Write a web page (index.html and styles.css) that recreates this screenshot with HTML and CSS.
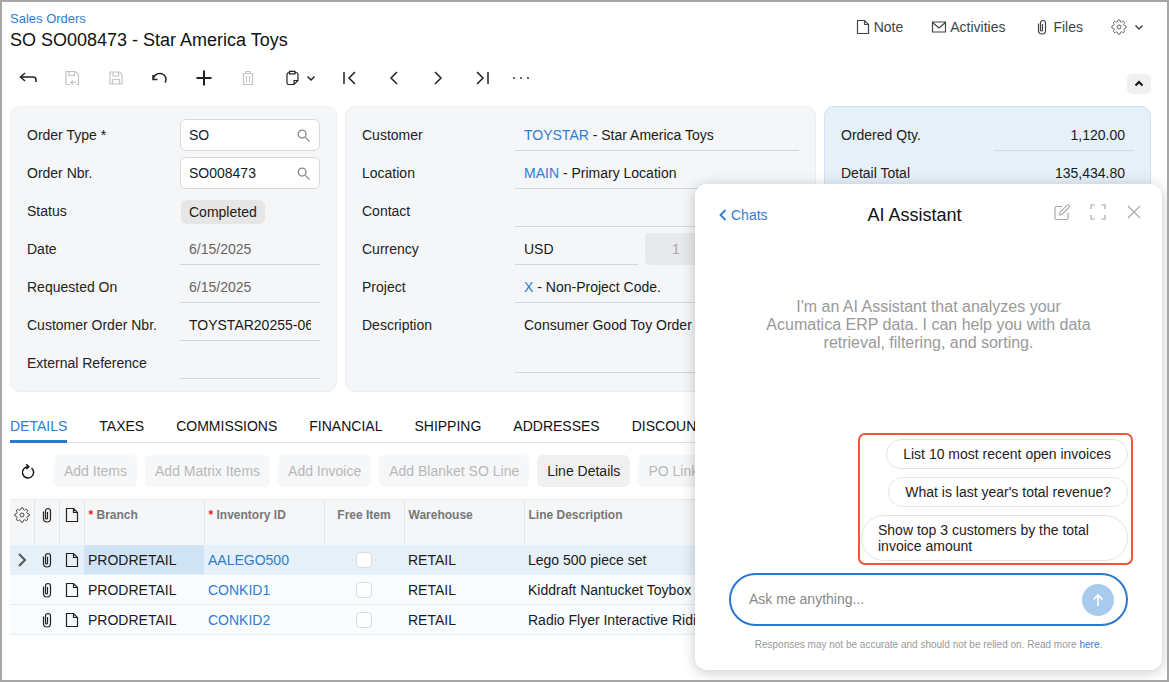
FILE: index.html
```html
<!DOCTYPE html>
<html lang="en">
<head>
    <meta charset="UTF-8">
    <meta name="viewport" content="width=device-width, initial-scale=1.0">
    <title>SO SO008473 - Star America Toys</title>
    <link rel="stylesheet" href="styles.css">
</head>
<body>
    <svg class="sprite" aria-hidden="true">
        <symbol id="i-gear" viewBox="0 0 24 24"><circle cx="12" cy="12" r="3"/><path d="M19.4 15a1.65 1.65 0 0 0 .33 1.82l.06.06a2 2 0 0 1 0 2.83 2 2 0 0 1-2.83 0l-.06-.06a1.65 1.65 0 0 0-1.82-.33 1.65 1.65 0 0 0-1 1.51V21a2 2 0 0 1-2 2 2 2 0 0 1-2-2v-.09A1.65 1.65 0 0 0 9 19.4a1.65 1.65 0 0 0-1.82.33l-.06.06a2 2 0 0 1-2.83 0 2 2 0 0 1 0-2.83l.06-.06a1.65 1.65 0 0 0 .33-1.82 1.65 1.65 0 0 0-1.51-1H3a2 2 0 0 1-2-2 2 2 0 0 1 2-2h.09A1.65 1.65 0 0 0 4.6 9a1.65 1.65 0 0 0-.33-1.82l-.06-.06a2 2 0 0 1 0-2.83 2 2 0 0 1 2.83 0l.06.06a1.65 1.65 0 0 0 1.82.33H9a1.65 1.65 0 0 0 1-1.51V3a2 2 0 0 1 2-2 2 2 0 0 1 2 2v.09a1.65 1.65 0 0 0 1 1.51 1.65 1.65 0 0 0 1.82-.33l.06-.06a2 2 0 0 1 2.83 0 2 2 0 0 1 0 2.83l-.06.06a1.65 1.65 0 0 0-.33 1.82V9a1.65 1.65 0 0 0 1.51 1H21a2 2 0 0 1 2 2 2 2 0 0 1-2 2h-.09a1.65 1.65 0 0 0-1.51 1z"/></symbol>
        <symbol id="i-clip" viewBox="0 0 16 16"><path d="M4.5 4.5v7a3.5 3.5 0 0 0 7 0V4a2.5 2.5 0 0 0-5 0v7a1 1 0 0 0 2 0V5"/></symbol>
        <symbol id="i-note" viewBox="0 0 16 16"><path d="M2.5 1.5h7l4 4v9h-11zM9.5 1.5v4h4"/></symbol>
        <symbol id="i-mail" viewBox="0 0 16 16"><path d="M1.5 3h13v10h-13zM1.5 3.5 8 9l6.5-5.500"/></symbol>
        <symbol id="i-search" viewBox="0 0 16 16"><circle cx="6.5" cy="6.5" r="4.2"/><path d="m10 10 4.500 4.500"/></symbol>
        <symbol id="i-down" viewBox="0 0 12 12"><path d="m2.5 4.5 3.500 3.500 3.500-3.500"/></symbol>
        <symbol id="i-floppy" viewBox="0 0 16 16"><path d="M2 2h9.500L14 4.500V14H2zM5 2v4h5.500V2M4.500 14V9.500h7V14"/></symbol>
    </svg>

    <div class="window">
        <header class="page-header">
            <div>
                <a class="crumb">Sales Orders</a>
                <h1 class="title">SO SO008473 - Star America Toys</h1>
            </div>
            <nav class="top-actions">
                <span class="top-action"><svg class="icon"><use href="#i-note"/></svg>Note</span>
                <span class="top-action"><svg class="icon"><use href="#i-mail"/></svg>Activities</span>
                <span class="top-action files-action"><svg class="icon"><use href="#i-clip"/></svg>Files</span>
                <span class="top-action gear-action"><svg class="icon"><use href="#i-gear"/></svg><svg class="icon-sm"><use href="#i-down"/></svg></span>
            </nav>
        </header>

        <div class="toolbar">
            <span class="tool"><svg class="icon-lg" viewBox="0 0 20 20"><path d="M7 5 2.500 9 7 13M2.500 9H15a3 3 0 0 1 3 3v2"/></svg></span>
            <span class="tool off"><svg class="icon" viewBox="0 0 16 16"><path d="M6 14.500H2v-13h9.500L14.500 4.500v10H12M5 1.500v4h5.500v-4M7 12.500h5M9 10.500l-2 2 2 2"/></svg></span>
            <span class="tool off"><svg class="icon"><use href="#i-floppy"/></svg></span>
            <span class="tool"><svg class="icon-lg" viewBox="0 0 20 20"><path d="M3 7v4.500h4.500M3.300 11.200A6.200 6.200 0 0 1 9.500 5.500a6 6 0 0 1 6.500 5.800c0 1.200-.3 2.200-.9 3.200"/></svg></span>
            <span class="tool"><svg class="icon-lg plus" viewBox="0 0 20 20"><path d="M10 2.500v15M2.500 10h15"/></svg></span>
            <span class="tool off"><svg class="icon" viewBox="0 0 16 16"><path d="M2.500 3.500h11M6 3.500v-2h4v2M3.500 3.500v11h9v-11M6.500 6v6M9.500 6v6"/></svg></span>
            <span class="tool tool-menu"><svg class="icon" viewBox="0 0 16 16"><path d="M5.500 2.500H5a2 2 0 0 0-2 2V13a1.500 1.500 0 0 0 1.500 1.500H10l4-4v-6a2 2 0 0 0-2-2h-.5M5.500 1.300h5.500v2.500H5.500zM10 14.500v-4h4"/></svg><svg class="icon-sm"><use href="#i-down"/></svg></span>
            <span class="tool"><svg class="icon-lg" viewBox="0 0 20 20"><path d="M4 4v12M15 4l-6 6 6 6"/></svg></span>
            <span class="tool"><svg class="icon-lg" viewBox="0 0 20 20"><path d="m13 4-6 6 6 6"/></svg></span>
            <span class="tool"><svg class="icon-lg" viewBox="0 0 20 20"><path d="m7 4 6 6-6 6"/></svg></span>
            <span class="tool"><svg class="icon-lg" viewBox="0 0 20 20"><path d="M16 4v12M5 4l6 6-6 6"/></svg></span>
            <span class="tool tool-more"><svg class="icon-lg dots" viewBox="0 0 20 20"><circle cx="3" cy="10" r="1"/><circle cx="10" cy="10" r="1"/><circle cx="17" cy="10" r="1"/></svg></span>
            <button class="collapse"><svg class="icon-sm chevron-up"><use href="#i-down"/></svg></button>
        </div>

        <section class="cards">
            <div class="card fields card-order">
                <label>Order Type <span class="req">*</span></label>
                <div class="input">SO<svg class="icon-search"><use href="#i-search"/></svg></div>
                <label>Order Nbr.</label>
                <div class="input">SO008473<svg class="icon-search"><use href="#i-search"/></svg></div>
                <label>Status</label>
                <div><span class="status">Completed</span></div>
                <label>Date</label>
                <div class="value muted">6/15/2025</div>
                <label>Requested On</label>
                <div class="value muted">6/15/2025</div>
                <label>Customer Order Nbr.</label>
                <div class="value"><span class="clip-text">TOYSTAR20255-06-15</span></div>
                <label>External Reference</label>
                <div class="value"></div>
            </div>

            <div class="card fields card-customer">
                <label>Customer</label>
                <div class="value"><a>TOYSTAR</a> - Star America Toys</div>
                <label>Location</label>
                <div class="value"><a>MAIN</a> - Primary Location</div>
                <label>Contact</label>
                <div class="value"></div>
                <label>Currency</label>
                <div class="currency">
                    <div class="value">USD</div>
                    <div class="rate">1</div>
                </div>
                <label>Project</label>
                <div class="value"><a>X</a> - Non-Project Code.</div>
                <label>Description</label>
                <div class="value value-tall">Consumer Good Toy Order</div>
            </div>

            <div class="card fields card-totals">
                <label>Ordered Qty.</label>
                <div class="value number">1,120.00</div>
                <label>Detail Total</label>
                <div class="value number">135,434.80</div>
            </div>
        </section>

        <nav class="tabs">
            <span class="tab active">Details</span>
            <span class="tab">Taxes</span>
            <span class="tab">Commissions</span>
            <span class="tab">Financial</span>
            <span class="tab">Shipping</span>
            <span class="tab">Addresses</span>
            <span class="tab">Discounts</span>
            <span class="tab">Payments</span>
        </nav>

        <div class="grid-toolbar">
            <span class="refresh"><svg class="icon-lg" viewBox="0 0 20 20"><path d="M13.500 7a5.600 5.600 0 1 1-3.500-1.200M8.200 3.300l2.600 2.500L8.200 8"/></svg></span>
            <button class="grid-btn">Add Items</button>
            <button class="grid-btn">Add Matrix Items</button>
            <button class="grid-btn">Add Invoice</button>
            <button class="grid-btn">Add Blanket SO Line</button>
            <button class="grid-btn on">Line Details</button>
            <button class="grid-btn">PO Link</button>
        </div>

        <table class="grid">
            <colgroup>
                <col class="c-first"><col class="c-icon"><col class="c-icon">
                <col class="c-wide"><col class="c-wide"><col class="c-free"><col class="c-wide"><col>
            </colgroup>
            <thead>
                <tr>
                    <th class="cell-icon"><svg class="icon"><use href="#i-gear"/></svg></th>
                    <th class="cell-icon"><svg class="icon"><use href="#i-clip"/></svg></th>
                    <th class="cell-icon"><svg class="icon"><use href="#i-note"/></svg></th>
                    <th><span class="req">*</span> Branch</th>
                    <th><span class="req">*</span> Inventory ID</th>
                    <th class="center">Free Item</th>
                    <th>Warehouse</th>
                    <th>Line Description</th>
                </tr>
            </thead>
            <tbody>
                <tr class="selected">
                    <td class="cell-icon"><svg class="row-arrow" viewBox="0 0 12 16"><path d="m3 2 6 6-6 6"/></svg></td>
                    <td class="cell-icon"><svg class="icon"><use href="#i-clip"/></svg></td>
                    <td class="cell-icon"><svg class="icon"><use href="#i-note"/></svg></td>
                    <td class="current">PRODRETAIL</td>
                    <td><a>AALEGO500</a></td>
                    <td class="center"><span class="check"></span></td>
                    <td>RETAIL</td>
                    <td>Lego 500 piece set</td>
                </tr>
                <tr>
                    <td class="cell-icon"></td>
                    <td class="cell-icon"><svg class="icon"><use href="#i-clip"/></svg></td>
                    <td class="cell-icon"><svg class="icon"><use href="#i-note"/></svg></td>
                    <td>PRODRETAIL</td>
                    <td><a>CONKID1</a></td>
                    <td class="center"><span class="check"></span></td>
                    <td>RETAIL</td>
                    <td>Kiddraft Nantucket Toybox</td>
                </tr>
                <tr>
                    <td class="cell-icon"></td>
                    <td class="cell-icon"><svg class="icon"><use href="#i-clip"/></svg></td>
                    <td class="cell-icon"><svg class="icon"><use href="#i-note"/></svg></td>
                    <td>PRODRETAIL</td>
                    <td><a>CONKID2</a></td>
                    <td class="center"><span class="check"></span></td>
                    <td>RETAIL</td>
                    <td>Radio Flyer Interactive Riding Toy</td>
                </tr>
            </tbody>
        </table>

        <aside class="assistant">
            <div class="assistant-head">
                <a class="back"><svg class="back-icon" viewBox="0 0 10 14"><path d="M7.500 2 2.500 7l5 5"/></svg>Chats</a>
                <h2 class="assistant-title">AI Assistant</h2>
                <div class="assistant-icons">
                    <svg class="icon-head" viewBox="0 0 18 18"><path d="M15 9.500V15a1.500 1.500 0 0 1-1.500 1.500h-10A1.500 1.500 0 0 1 2 15V5a1.500 1.500 0 0 1 1.500-1.500H9M6.500 12l.6-2.800 7-7a1.200 1.200 0 0 1 2 2l-7 7z"/></svg>
                    <svg class="icon-head" viewBox="0 0 18 18"><path d="M2 6V2h4M12 2h4v4M16 12v4h-4M6 16H2v-4"/></svg>
                    <svg class="icon-head" viewBox="0 0 18 18"><path d="m3 3 12 12M15 3 3 15"/></svg>
                </div>
            </div>

            <p class="intro">I'm an AI Assistant that analyzes your Acumatica ERP data. I can help you with data retrieval, filtering, and sorting.</p>

            <div class="suggestions">
                <button class="pill">List 10 most recent open invoices</button>
                <button class="pill">What is last year's total revenue?</button>
                <button class="pill">Show top 3 customers by the total invoice amount</button>
            </div>

            <div class="ask">
                <span class="ask-text">Ask me anything...</span>
                <span class="send"><svg class="send-icon" viewBox="0 0 16 16"><path d="M8 14V3M3.500 7.500 8 3l4.500 4.500"/></svg></span>
            </div>

            <p class="disclaimer">Responses may not be accurate and should not be relied on. Read more <a>here</a>.</p>
        </aside>
    </div>
</body>
</html>
```

FILE: styles.css
```css
* {
    box-sizing: border-box;
}

body {
    margin: 0;
    font-family: "Liberation Sans", Arial, sans-serif;
    font-size: 14px;
    color: #1a1a1a;
    background: #fff;
}

a {
    color: #2f7dd1;
}

.sprite {
    display: none;
}

svg {
    fill: none;
    stroke: currentColor;
    stroke-width: 1.2;
    flex: none;
}

.icon {
    width: 16px;
    height: 16px;
}

.icon-sm {
    width: 12px;
    height: 12px;
    stroke-width: 1.5;
}

.icon-lg {
    width: 20px;
    height: 20px;
    stroke-width: 1.5;
}

.window {
    position: relative;
    width: 1169px;
    height: 682px;
    border: 2px solid #a6a6a6;
    overflow: hidden;
}

/* header */
.page-header {
    display: flex;
    justify-content: space-between;
    height: 54px;
    padding: 9px 16px 0 8px;
}

.crumb {
    display: block;
    font-size: 13px;
    line-height: 16px;
}

.title {
    margin: 1px 0 0;
    font-size: 18px;
    font-weight: normal;
    line-height: 24px;
    color: #111;
}

.top-actions {
    display: flex;
    align-items: center;
    height: 32px;
    margin-right: 6px;
    color: #444;
}

.top-action {
    display: flex;
    align-items: center;
    gap: 3px;
    margin-left: 28px;
}

.files-action {
    margin-left: 29px;
}

.gear-action {
    gap: 6px;
}

/* main toolbar */
.toolbar {
    display: flex;
    align-items: center;
    height: 44px;
    padding: 0 16px 0 4px;
    color: #222;
}

.tool {
    display: flex;
    align-items: center;
    justify-content: center;
    width: 44px;
    height: 44px;
}

.tool.off {
    color: #c4c4c4;
}

.tool-menu {
    width: 58px;
    justify-content: flex-start;
    gap: 5px;
    padding-left: 14px;
}

.tool-more {
    width: 34px;
}

.dots {
    fill: #333;
    stroke: none;
}

.plus {
    stroke-width: 2;
}

.collapse {
    display: flex;
    align-items: center;
    justify-content: center;
    align-self: flex-end;
    width: 24px;
    height: 20px;
    margin: 0 0 6px auto;
    padding: 0;
    border: none;
    border-radius: 5px;
    background: #eef0f2;
    color: #111;
}

.chevron-up {
    transform: rotate(180deg);
    stroke-width: 2;
}

/* form cards */
.cards {
    display: flex;
    gap: 8px;
    margin: 6px 16px 0 8px;
}

.card {
    height: 286px;
    padding: 9px 16px;
    border: 1px solid #eceef1;
    border-radius: 10px;
    background: #f5f6f8;
    overflow: hidden;
}

.card-order,
.card-totals {
    width: 327px;
}

.card-customer {
    width: 471px;
}

.card-totals {
    background: #e5f0f9;
    border-color: #cde2f4;
}

.fields {
    display: grid;
    grid-template-columns: 153px 1fr;
    grid-auto-rows: 38px;
    align-items: center;
}

.fields label {
    color: #222;
}

.req {
    color: #111;
}

.input {
    display: flex;
    align-items: center;
    justify-content: space-between;
    height: 32px;
    padding: 0 8px;
    border: 1px solid #d8dadd;
    border-radius: 6px;
    background: #fff;
}

.icon-search {
    width: 15px;
    height: 15px;
    color: #888;
    stroke-width: 1.4;
}

.value {
    height: 32px;
    padding: 0 9px;
    line-height: 32px;
    border-bottom: 1px solid #d5d7da;
    white-space: nowrap;
    overflow: hidden;
}

.muted {
    color: #666;
}

.clip-text {
    display: block;
    overflow: hidden;
}

.number {
    text-align: right;
}

.status {
    display: inline-block;
    height: 24px;
    margin: 2px 0 0 1px;
    padding: 0 8px;
    line-height: 24px;
    border-radius: 6px;
    background: #e6e6e6;
}

.currency {
    display: flex;
    gap: 7px;
}

.currency .value {
    width: 123px;
}

.rate {
    width: 62px;
    height: 32px;
    line-height: 32px;
    text-align: center;
    border-radius: 5px;
    background: #e8e9eb;
    color: #aaa;
}

.value-tall {
    grid-row: span 2;
    align-self: start;
    height: 64px;
    margin-top: 3px;
}

/* tabs */
.tabs {
    display: flex;
    gap: 32px;
    height: 33px;
    margin: 18px 16px 0 8px;
    border-bottom: 1px solid #dfe1e4;
    white-space: nowrap;
}

.tab {
    height: 33px;
    padding-top: 8px;
    text-transform: uppercase;
    color: #111;
}

.tab.active {
    color: #2f7dd1;
    border-bottom: 3px solid #2a78d0;
}

/* grid toolbar */
.grid-toolbar {
    display: flex;
    align-items: center;
    gap: 8px;
    height: 32px;
    margin: 12px 16px 0 8px;
}

.refresh {
    display: flex;
    justify-content: center;
    width: 36px;
    color: #111;
}

.grid-btn {
    height: 32px;
    padding: 0 10px;
    border: none;
    border-radius: 6px;
    background: #f6f7f8;
    color: #b8b8b8;
    font: inherit;
}

.grid-btn.on {
    background: #f0f0f0;
    color: #222;
}

/* grid */
.grid {
    width: 1141px;
    margin: 12px 16px 0 8px;
    border-collapse: collapse;
    table-layout: fixed;
}

.c-first {
    width: 24px;
}

.c-icon {
    width: 25px;
}

.c-wide {
    width: 120px;
}

.c-free {
    width: 80px;
}

.grid th {
    height: 45px;
    padding: 7px 4px 0;
    vertical-align: top;
    text-align: left;
    font-size: 12px;
    line-height: 16px;
    color: #777;
    background: #f5f6f8;
    border-top: 1px solid #e8eaed;
    border-right: 1px solid #e3e5e8;
}

.grid th.center,
.grid td.center {
    text-align: center;
}

.grid th .req {
    color: #e8202a;
}

.grid th.cell-icon {
    padding: 7px 0 0;
    text-align: center;
    color: #222;
}

.grid td {
    height: 30px;
    padding: 0 4px;
    background: #f8fcff;
    border-bottom: 1px solid #e6edf3;
    white-space: nowrap;
    overflow: hidden;
}

.grid td.cell-icon {
    padding: 0;
    text-align: center;
    color: #222;
}

.grid td svg {
    vertical-align: middle;
}

.grid .selected td {
    padding-top: 1px;
    background: #e5f0f9;
    border-bottom-color: #e5f0f9;
}

.grid .selected td.current {
    background: #cfe3f4;
}

.row-arrow {
    width: 12px;
    height: 16px;
    color: #555;
    stroke-width: 2;
}

.check {
    display: inline-block;
    width: 16px;
    height: 16px;
    vertical-align: middle;
    border: 1px solid #dcdcdc;
    border-radius: 4px;
    background: #fff;
}

/* chat panel */
.assistant {
    position: absolute;
    top: 182px;
    left: 693px;
    display: flex;
    flex-direction: column;
    width: 467px;
    height: 486px;
    padding: 0 34px;
    border-radius: 12px;
    background: #fff;
    box-shadow: 0 2px 14px rgba(0, 0, 0, 0.22);
}

.assistant-head {
    display: flex;
    align-items: center;
    height: 56px;
    margin: 0 -15px 0 -11px;
}

.back {
    display: flex;
    align-items: center;
    gap: 3px;
    margin-top: 5px;
}

.back-icon {
    width: 10px;
    height: 14px;
    stroke-width: 1.8;
}

.assistant-title {
    margin: 6px 0 0 100px;
    font-size: 18px;
    font-weight: normal;
    color: #111;
}

.assistant-icons {
    display: flex;
    gap: 18px;
    margin-left: auto;
    color: #a9a9a9;
}

.icon-head {
    width: 18px;
    height: 18px;
    stroke-width: 1.2;
}

.intro {
    width: 340px;
    margin: 58px auto 0;
    font-size: 16px;
    line-height: 18px;
    text-align: center;
    color: #999;
}

.suggestions {
    display: flex;
    flex-direction: column;
    align-items: flex-end;
    gap: 8px;
    align-self: flex-end;
    width: 275px;
    margin: 81px -5px 0 0;
    padding: 4px 3px 2px 1px;
    border: 2px solid #f0563a;
    border-radius: 7px;
}

.pill {
    padding: 6px 16px;
    border: 1px solid #e2e2e2;
    border-radius: 23px;
    background: #fff;
    color: #222;
    font: inherit;
    line-height: 16px;
    text-align: left;
}

.ask {
    display: flex;
    align-items: center;
    justify-content: space-between;
    height: 53px;
    margin-top: 8px;
    padding: 0 12px 0 18px;
    border: 2px solid #2a78d0;
    border-radius: 27px;
}

.ask-text {
    padding-bottom: 2px;
    color: #888;
}

.send {
    display: flex;
    align-items: center;
    justify-content: center;
    width: 32px;
    height: 32px;
    border-radius: 50%;
    background: #a9cbee;
}

.send-icon {
    width: 16px;
    height: 16px;
    color: #fff;
    stroke-width: 1.6;
}

.disclaimer {
    margin: 12px 0 0;
    font-size: 10px;
    line-height: 14px;
    text-align: center;
    color: #999;
}
```
